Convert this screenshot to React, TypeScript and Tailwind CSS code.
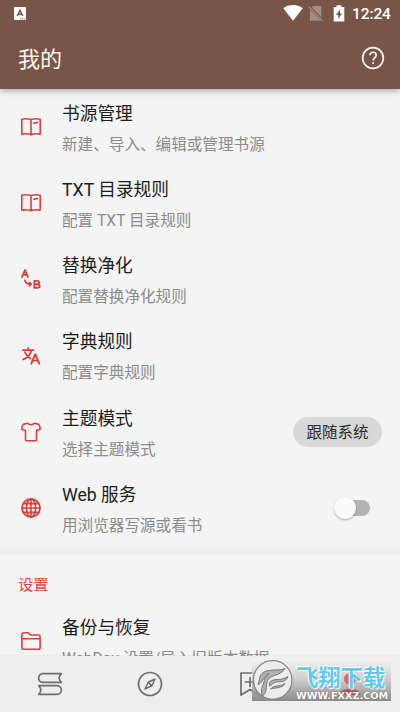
import type { ReactNode } from "react";

const stroke = {
  fill: "none",
  stroke: "currentColor",
  strokeWidth: 1.6,
  strokeLinecap: "round" as const,
  strokeLinejoin: "round" as const,
};

function BookIcon() {
  return (
    <svg viewBox="0 0 20 20" className="w-5 h-5" {...stroke}>
      <path d="M.8 2.200C4 1.500 7.500 1.700 10 2.800 12.500 1.700 16 1.500 19.200 2.200V17.100C16 16.600 12.500 16.700 10 17.700 7.500 16.700 4 16.600.8 17.100ZM10 2.800V17.700" />
      <path d="M12.800 6.200 16.500 5.400" />
    </svg>
  );
}

function ReplaceIcon() {
  return (
    <svg viewBox="0 0 20 20" className="w-5 h-5" {...stroke}>
      <path d="M1 8 4 1 7 8M2 5.700H6" strokeWidth="1.900" />
      <path
        d="M13.300 11.900V18.800H16.300C19.600 18.800 19.600 15.200 16.300 15.200H13.300M13.300 11.900H16C18.800 11.900 18.800 15.200 16 15.200"
        strokeWidth="1.900"
      />
      <path d="M3.800 11.300C4.400 13.700 6.500 15.200 10 15.200M8.300 13.300 10.400 15.200 8.300 16.800" />
    </svg>
  );
}

function TranslateIcon() {
  return (
    <svg viewBox="0 0 20 20" className="w-5 h-5" {...stroke}>
      <path d="M1.800 4.200H12.500M7.200 2V4.200M10.400 4.400C9.200 8.600 6 12 2.200 13.400M4 6.200C5 9 7.300 11.400 9.500 12.700" strokeWidth="1.800" />
      <path d="M10.300 17.700 14.200 8.200 18.200 17.700M11.700 14.600H16.800" strokeWidth="1.900" />
    </svg>
  );
}

function ShirtIcon() {
  return (
    <svg viewBox="0 0 20 20" className="w-5 h-5" {...stroke}>
      <path d="M6.700 1.200C7.800 3.300 12.200 3.300 13.300 1.200L17 2.100C18 2.500 19 5.300 19.200 7.200L15.500 8.500V17.400Q15.500 18.800 14 18.800H6Q4.500 18.800 4.500 17.400V8.500L.8 7.200C1 5.300 2 2.500 3 2.100Z" />
    </svg>
  );
}

function GlobeIcon() {
  return (
    <svg viewBox="0 0 20 20" className="w-5 h-5" {...stroke}>
      <circle cx="10" cy="10" r="9" strokeWidth="1.800" />
      <ellipse cx="10" cy="10" rx="4.600" ry="9" />
      <path d="M10 1V19M1 10H19M2.600 5.600H17.400M2.600 14.400H17.400" />
    </svg>
  );
}

function FolderIcon() {
  return (
    <svg viewBox="0 0 20 20" className="w-5 h-5" {...stroke}>
      <path d="M.9 16.400V3.500Q.9 1.700 2.700 1.700H7.200L9.400 4H17.300Q19.100 4 19.100 5.800V16.400Q19.100 18.200 17.300 18.200H2.700Q.9 18.200.9 16.400ZM.9 7.700H19.100" />
    </svg>
  );
}

function StatusBar() {
  return (
    <div className="flex items-center h-7 pl-[14px] pr-[8px]">
      <svg viewBox="0 0 12 13" className="w-3 h-[13px] mt-[-1px]" fill="none" stroke="#795548">
        <rect width="12" height="13" rx="1" fill="#fff" stroke="none" />
        <path d="M3.300 9 6 3.200 8.700 9M4.200 7.300H7.800" strokeWidth="1.500" />
        <path d="M6 11.800H11" strokeWidth=".8" strokeDasharray="1.300 .6" />
      </svg>
      <svg viewBox="0 0 20 16" className="w-5 h-4 ml-auto mt-[-2px]">
        <path d="M.3 3.300C6 -1 14 -1 19.700 3.300L10 15.800Z" fill="#fff" />
      </svg>
      <svg viewBox="0 0 16 17" className="w-4 h-[17px] ml-[5px] mt-[-1px]">
        <path d="M5.200 1H13.300V12.200L3.800 2.400ZM2 4.800 12.800 15.800H2Z" fill="#a58b82" />
        <path d="M1 2 14.500 16" stroke="#a58b82" strokeWidth="1.300" />
      </svg>
      <svg viewBox="0 0 12 17" className="w-3 h-[17px] ml-[9px] mt-[-1px]">
        <path d="M3.600 .3H8.400V2H11.300V16.500H.7V2H3.600Z" fill="#fff" />
        <path d="M7 4.500 3 10H5.300V14L9 8.500H7Z" fill="#795548" />
      </svg>
      <p className="ml-[7px] w-[40px] whitespace-nowrap text-[15.500px] leading-7 font-medium tracking-[-.1px]">
        12:24
      </p>
    </div>
  );
}

function Header() {
  return (
    <header className="relative z-10 h-[89px] shrink-0 bg-[#795548] text-white shadow-[0_2px_6px_rgba(0,0,0,.3)]">
      <StatusBar />
      <div className="flex items-center justify-between h-[61px] pl-[18px] pr-[15px]">
        <h1 className="mt-[3px] text-[22px] leading-8 text-[#fdf3ef]">我的</h1>
        <svg viewBox="0 0 24 24" className="w-6 h-6 mt-[-1px]" fill="none" stroke="#fdf3ef" strokeWidth="1.700">
          <circle cx="12" cy="12" r="10.300" />
          <path d="M9 9.300C9 5.200 15.200 5.300 15.200 9.200 15.200 11.500 12.200 11.700 12.200 14.500" />
          <path d="M12.200 16.200V18" />
        </svg>
      </div>
    </header>
  );
}

type RowProps = {
  icon: ReactNode;
  title: string;
  summary: string;
  children?: ReactNode;
};

function Row({ icon, title, summary, children }: RowProps) {
  return (
    <div className="flex items-center h-[76.200px] shrink-0 pl-[21px] pr-[18px]">
      <div className="w-5 h-5 text-[#d9403d]">{icon}</div>
      <div className="ml-[21px] pt-[5.500px] flex-1 whitespace-nowrap">
        <p className="text-[17.700px] leading-[31px] text-[#1c1c1c]">{title}</p>
        <p className="text-[15.600px] leading-[31px] text-[#8b8b8b]">{summary}</p>
      </div>
      {children}
    </div>
  );
}

function Switch() {
  return (
    <div className="relative w-[38px] h-6 mr-[12px]">
      <div className="absolute right-0 top-[4px] w-[30px] h-[16px] rounded-full bg-[#b3b3b3]" />
      <div className="absolute left-[2px] top-[1px] w-[22px] h-[22px] rounded-full bg-[#fafafa] shadow-[0_1px_2px_rgba(0,0,0,.3)]" />
    </div>
  );
}

function Watermark() {
  return (
    <div className="absolute left-[252px] top-[3px] w-[139px] h-[42px] bg-linear-to-b from-[#f4f4f4]/80 via-[#c4c4c4]/80 to-[#808080]/90">
      {/* selected tab icon shows through the banner */}
      <svg viewBox="0 0 24 24" className="absolute left-[86px] top-[12px] w-6 h-6" fill="#c0484b">
        <circle cx="12" cy="8" r="6" opacity=".7" />
        <path d="M1.500 24C1.500 15.500 22.500 15.500 22.500 24Z" opacity=".9" />
      </svg>
      <svg viewBox="0 0 42 42" className="absolute left-0 top-0 w-[42px] h-[42px]">
        <circle cx="20.700" cy="21" r="19.300" fill="#ececec" stroke="#858585" strokeWidth="1.300" />
        <path
          d="M10 37C17 34 12 24 17 19.500 21 15.500 28 17 33 9.500 27 12.500 16 9 10 14.500 6.500 18 8 21 6 26 12 22 11.500 17 17 14.500 12 18 13 22 10.500 27 9 30 9.500 34 10 37Z"
          fill="#b0b0b0"
          stroke="#777"
          strokeLinejoin="round"
        />
        <path
          d="M17.500 24C21 18 28 23 36 17.500 34 23.500 28 22.500 24.500 23 21 23.500 20 26 17.500 27ZM18.500 30C22 25.500 27 28.500 33 24.500 30 29.500 24 28.500 18.500 30Z"
          fill="#b0b0b0"
          stroke="#777"
          strokeLinejoin="round"
        />
      </svg>
      <p className="absolute left-[44px] top-[7px] whitespace-nowrap text-[22.300px] leading-6 font-bold text-[#62c9ed] [text-shadow:0_0_1px_#fff,1px_1px_1px_#fff,-1px_-1px_1px_#fff]">
        飞翔下载
      </p>
      <p className="absolute left-[44px] top-[31px] whitespace-nowrap origin-left scale-x-[1.020] font-['DejaVu_Sans'] text-[9.500px] leading-[11px] font-bold text-white [text-shadow:0_0_1px_#555]">
        WWW.FXXZ.COM
      </p>
    </div>
  );
}

function BottomNav() {
  return (
    <nav className="relative z-10 h-[56px] shrink-0 bg-[#eeeeee] shadow-[0_-1px_1px_rgba(0,0,0,.03)]">
      <div className="grid grid-cols-4 h-full place-items-center text-[#6e6e6e]">
        <svg viewBox="0 0 26 24" className="w-[26px] h-6" {...stroke} strokeWidth={1.700}>
          <path d="M24.300 1.600H6C.2 1.600.2 10.400 6 10.400H24.300M24.300 1.600Q20 6 24.300 10.400" />
          <path d="M1.700 13.600H20C25.800 13.600 25.800 22.400 20 22.400H1.700M1.700 13.600Q6 18 1.700 22.400" />
        </svg>
        <svg viewBox="0 0 26 26" className="w-[26px] h-[26px]" {...stroke}>
          <circle cx="13" cy="13" r="11.500" strokeWidth="1.700" />
          <path d="M18 8 14.800 14.800 8 18 11.200 11.200ZM11.200 11.200 14.800 14.800" strokeWidth="1.500" />
        </svg>
        <svg viewBox="0 0 22 26" className="w-[22px] h-[26px]" {...stroke} strokeWidth={1.700}>
          <path d="M2 2H20V24L11 18.500 2 24ZM6.500 11H15.500M11 6.500V15.500" />
        </svg>
      </div>
      <Watermark />
    </nav>
  );
}

export default function App() {
  return (
    <div className="flex flex-col w-[400px] h-[712px] overflow-hidden bg-[#f4f4f4] font-[Roboto,'Noto_Sans_CJK_SC',sans-serif]">
      <Header />
      <main className="flex flex-col flex-1 min-h-0 overflow-hidden">
        <Row icon={<BookIcon />} title="书源管理" summary="新建、导入、编辑或管理书源" />
        <Row icon={<BookIcon />} title="TXT 目录规则" summary="配置 TXT 目录规则" />
        <Row icon={<ReplaceIcon />} title="替换净化" summary="配置替换净化规则" />
        <Row icon={<TranslateIcon />} title="字典规则" summary="配置字典规则" />
        <Row icon={<ShirtIcon />} title="主题模式" summary="选择主题模式">
          <div className="flex items-center justify-center w-[89px] h-[30px] pt-[3px] rounded-full bg-[#d8d8d8] text-[15.500px] text-[#2b2b2b]">
            跟随系统
          </div>
        </Row>
        <Row icon={<GlobeIcon />} title="Web 服务" summary="用浏览器写源或看书">
          <Switch />
        </Row>
        <div className="h-[9px] shrink-0 bg-[#eeeeee]" />
        <h2 className="h-[48px] shrink-0 pt-[13.500px] pl-[18px] text-[15.300px] leading-8 text-[#dc4643]">设置</h2>
        <Row icon={<FolderIcon />} title="备份与恢复" summary="WebDav 设置/导入旧版本数据" />
      </main>
      <BottomNav />
    </div>
  );
}
